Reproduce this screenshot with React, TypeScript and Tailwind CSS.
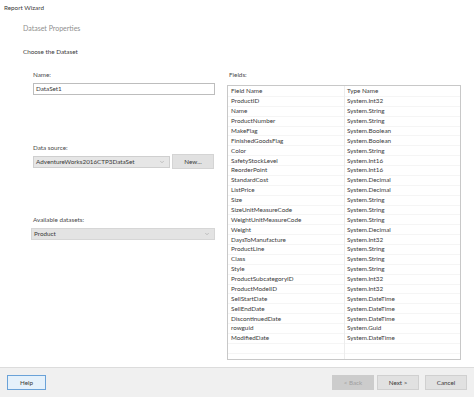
import { ChevronDown } from "lucide-react";

const fields: [string, string][] = [
  ["ProductID", "System.Int32"],
  ["Name", "System.String"],
  ["ProductNumber", "System.String"],
  ["MakeFlag", "System.Boolean"],
  ["FinishedGoodsFlag", "System.Boolean"],
  ["Color", "System.String"],
  ["SafetyStockLevel", "System.Int16"],
  ["ReorderPoint", "System.Int16"],
  ["StandardCost", "System.Decimal"],
  ["ListPrice", "System.Decimal"],
  ["Size", "System.String"],
  ["SizeUnitMeasureCode", "System.String"],
  ["WeightUnitMeasureCode", "System.String"],
  ["Weight", "System.Decimal"],
  ["DaysToManufacture", "System.Int32"],
  ["ProductLine", "System.String"],
  ["Class", "System.String"],
  ["Style", "System.String"],
  ["ProductSubcategoryID", "System.Int32"],
  ["ProductModelID", "System.Int32"],
  ["SellStartDate", "System.DateTime"],
  ["SellEndDate", "System.DateTime"],
  ["DiscontinuedDate", "System.DateTime"],
  ["rowguid", "System.Guid"],
  ["ModifiedDate", "System.DateTime"],
];

function Row({ name, type }: { name: string; type: string }) {
  return (
    <div className="flex h-[9.88px] items-center border-b border-[#f5f5f5]">
      <div className="w-[116px] pl-[3px]">{name}</div>
      <div className="flex-1 pl-[3px]">{type}</div>
    </div>
  );
}

export default function App() {
  return (
    <div
      className="flex h-[397px] w-[474px] flex-col bg-white text-[6.3px] leading-[10px] text-[#3a3a3a]"
      style={{ fontFamily: "Lato, 'Open Sans', sans-serif" }}
    >
      <div className="flex-1">
        <div className="px-[4px] pt-[3px]">Report Wizard</div>
        <div className="mt-[10px] px-[23px] text-[7px] text-[#8f8f8f]">Dataset Properties</div>
        <div className="mt-[14px] px-[23px]">Choose the Dataset</div>

        <div className="mt-[13px] flex pl-[31px]">
          {/* left column */}
          <div className="w-[184px]">
            <div className="pl-[2px] text-[#4a4a4a]">Name:</div>
            <div className="mt-[3px] ml-[2px] h-[12px] border border-[#bdbdbd] bg-white pl-[2px] leading-[10px]">
              DataSet1
            </div>

            <div className="mt-[48px] pl-[2px] text-[#4a4a4a]">Data source:</div>
            <div className="mt-[1px] flex items-start pl-[2px]">
              <div className="mt-[2px] flex h-[12px] w-[137px] items-center justify-between border border-[#cfcfcf] bg-[#e6e6e6] pl-[2px] pr-[4px]">
                <span>AdventureWorks2016CTP3DataSet</span>
                <ChevronDown className="h-[6px] w-[6px] text-[#999]" strokeWidth={2} />
              </div>
              <div className="ml-[2px] flex h-[15px] w-[42px] items-center justify-center border border-[#d4d4d4] bg-[#e1e1e1]">
                New...
              </div>
            </div>

            <div className="mt-[46px] pl-[2px] text-[#4a4a4a]">Available datasets:</div>
            <div className="mt-[3px] flex h-[12px] w-[184px] items-center justify-between border border-[#d6d6d6] bg-[#e3e3e3] pl-[2px] pr-[4px]">
              <span>Product</span>
              <ChevronDown className="h-[6px] w-[6px] text-[#999]" strokeWidth={2} />
            </div>
          </div>

          {/* right column */}
          <div className="ml-[12px] w-[234px]">
            <div className="pl-[2px] text-[#4a4a4a]">Fields:</div>
            <div className="relative mt-[5px] h-[275px] border border-[#c8c8c8] bg-white pt-[1px]">
              <div className="absolute bottom-0 left-[116px] top-0 w-px bg-[#ededed]" />
              <Row name="Field Name" type="Type Name" />
              {fields.map(([n, t]) => (
                <Row key={n} name={n} type={t} />
              ))}
              <div className="h-[9.88px] border-b border-[#f5f5f5]" />
            </div>
          </div>
        </div>
      </div>

      <div className="flex h-[30px] items-center border-t border-[#dcdcdc] bg-[#f0f0f0] px-[7px]">
        <button className="flex h-[15px] w-[39px] items-center justify-center border border-[#6aa2d8] bg-[#e5f1fb]">
          Help
        </button>
        <div className="flex-1" />
        <button className="flex h-[15px] w-[42px] items-center justify-center border border-[#cccccc] bg-[#cccccc] text-[#a0a0a0]">
          &lt; Back
        </button>
        <button className="ml-[3px] flex h-[15px] w-[42px] items-center justify-center border border-[#d0d0d0] bg-[#e1e1e1]">
          Next &gt;
        </button>
        <button className="ml-[6px] flex h-[15px] w-[42px] items-center justify-center border border-[#d0d0d0] bg-[#e1e1e1]">
          Cancel
        </button>
      </div>
    </div>
  );
}
